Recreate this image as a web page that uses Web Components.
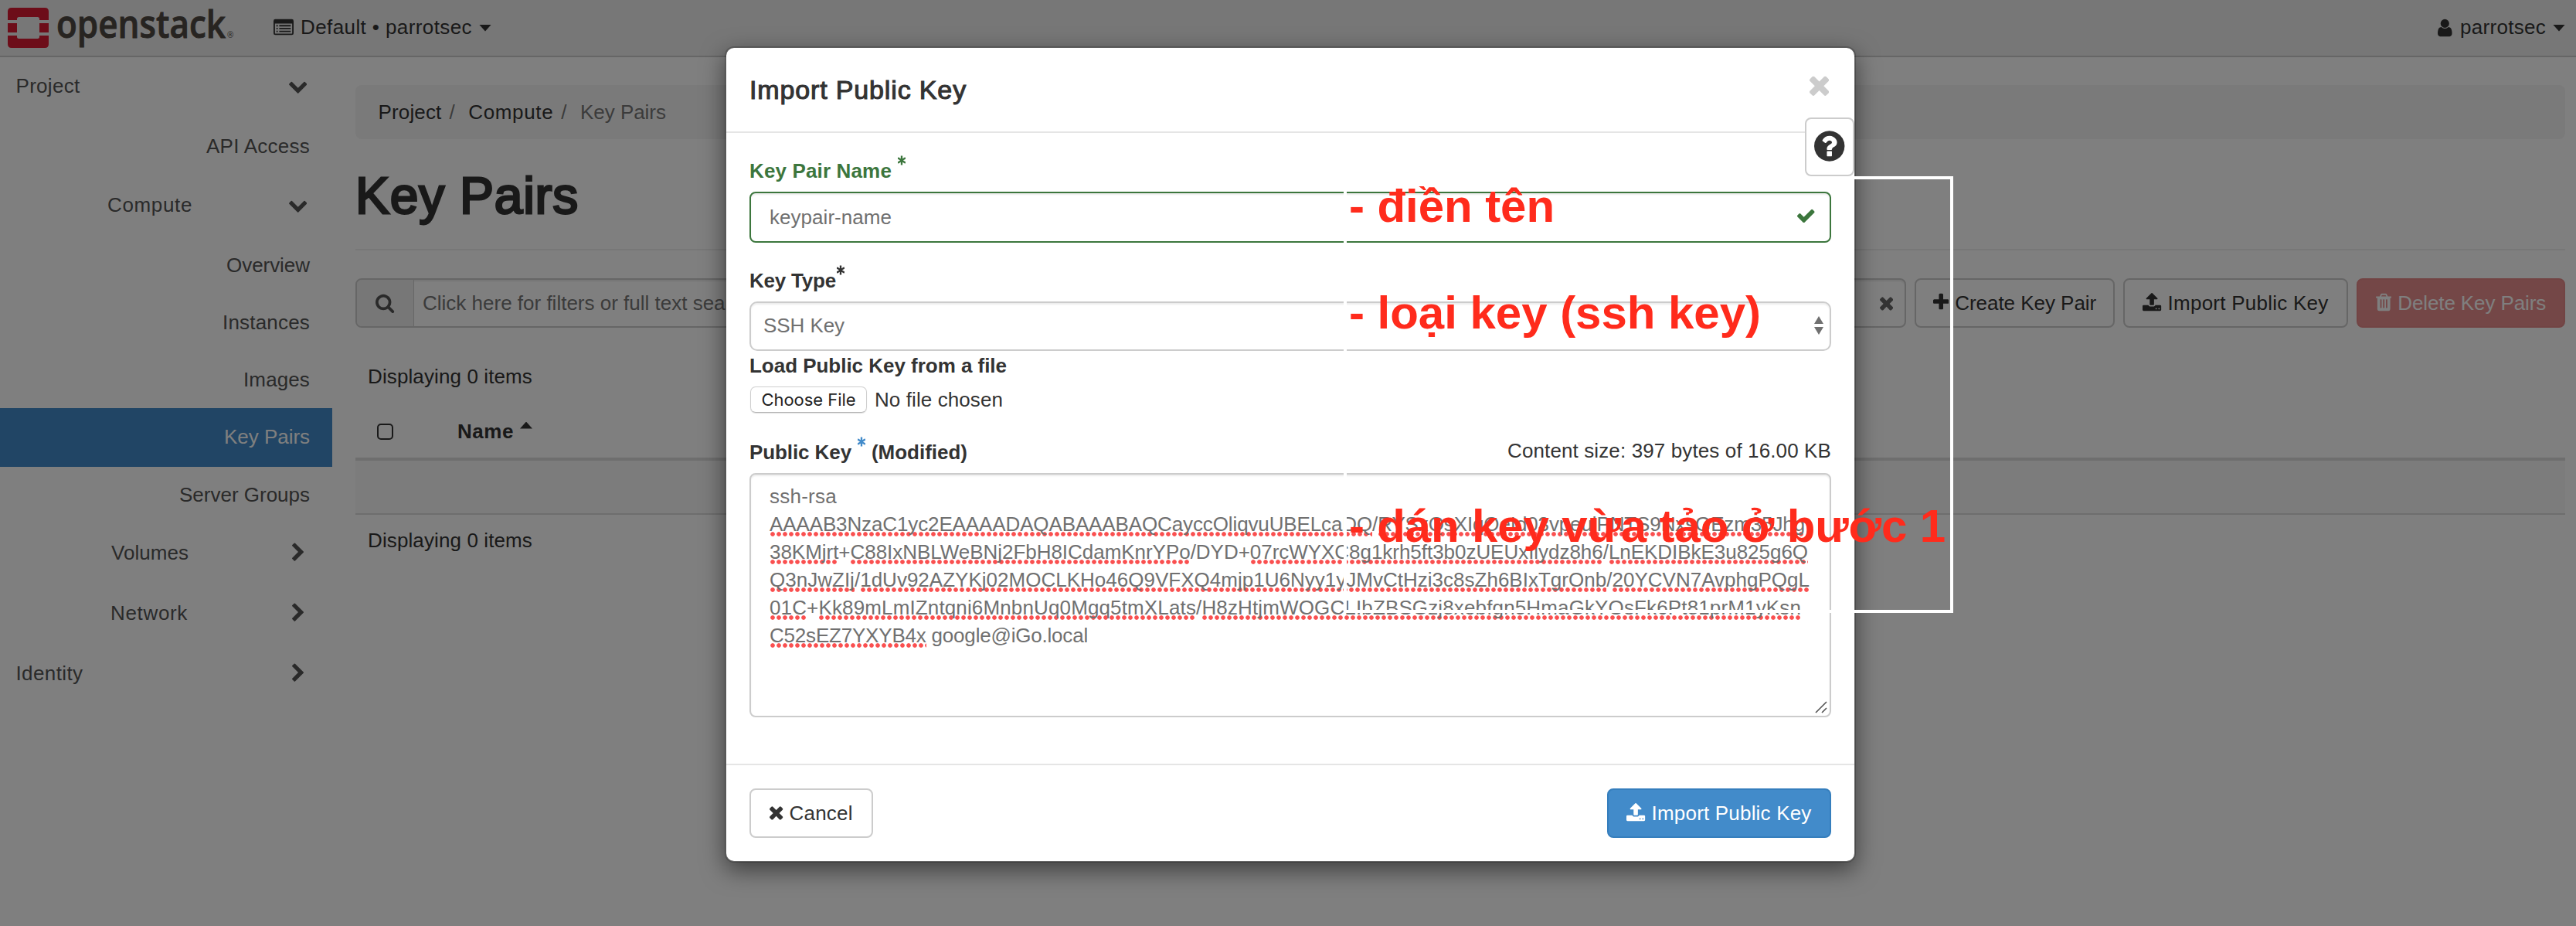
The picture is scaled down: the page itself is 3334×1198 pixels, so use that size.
<!DOCTYPE html>
<html lang="en">
<head>
<meta charset="utf-8">
<title>Key Pairs - OpenStack Dashboard</title>
<style>
  html, body { margin: 0; height: 100%; overflow: hidden; background: #fff; }
  body { font: 26px/36px "Liberation Sans", sans-serif; color: #333; }
</style>
</head>
<body>
<os-dashboard></os-dashboard>
<script>
const ICONS = {
  check: [120, 1552, 'M1671 566q0 40-28 68l-724 724-136 136q-28 28-68 28t-68-28l-136-136-362-362q-28-28-28-68t28-68l136-136q28-28 68-28t68 28l294 295 656-657q28-28 68-28t68 28l136 136q28 28 28 68z'],
  times: [302, 1188, 'M1490 1322q0 40-28 68l-136 136q-28 28-68 28t-68-28l-294-294-294 294q-28 28-68 28t-68-28l-136-136q-28-28-28-68t28-68l294-294-294-294q-28-28-28-68t28-68l136-136q28-28 68-28t68 28l294 294 294-294q28-28 68-28t68 28l136 136q28 28 28 68t-28 68l-294 294 294 294q28 28 28 68z'],
  plus: [192, 1408, 'M1600 736v192q0 40-28 68t-68 28h-416v416q0 40-28 68t-68 28h-192q-40 0-68-28t-28-68v-416h-416q-40 0-68-28t-28-68v-192q0-40 28-68t68-28h416v-416q0-40 28-68t68-28h192q40 0 68 28t28 68v416h416q40 0 68 28t28 68z'],
  upload: [64, 1664, 'M1344 1472q0-26-19-45t-45-19-45 19-19 45 19 45 45 19 45-19 19-45zm256 0q0-26-19-45t-45-19-45 19-19 45 19 45 45 19 45-19 19-45zm128-224v320q0 40-28 68t-68 28h-1472q-40 0-68-28t-28-68v-320q0-40 28-68t68-28h427q21 56 70.5 92t110.5 36h256q61 0 110.5-36t70.5-92h427q40 0 68 28t28 68zm-325-648q-17 40-59 40h-256v448q0 26-19 45t-45 19h-256q-26 0-45-19t-19-45v-448h-256q-42 0-59-40-17-39 14-69l448-448q18-19 45-19t45 19l448 448q31 30 14 69z'],
  down: [90, 1612, 'M1683 808l-742 741q-19 19-45 19t-45-19l-742-741q-19-19-19-45.5t19-45.5l166-165q19-19 45-19t45 19l531 531 531-531q19-19 45-19t45 19l166 165q19 19 19 45.5t-19 45.5z'],
  right: [346, 1036, 'M1363 877l-742 742q-19 19-45 19t-45-19l-166-166q-19-19-19-45t19-45l531-531-531-531q-19-19-19-45t19-45l166-166q19-19 45-19t45 19l742 742q19 19 19 45t-19 45z'],
  search: [64, 1664, 'M1216 832q0-185-131.5-316.5t-316.5-131.5-316.5 131.5-131.5 316.5 131.5 316.5 316.5 131.5 316.5-131.5 131.5-316.5zm512 832q0 52-38 90t-90 38q-54 0-90-38l-343-342q-179 124-399 124-143 0-273.5-55.5t-225-150-150-225-55.5-273.5 55.5-273.5 150-225 225-150 273.5-55.5 273.5 55.5 225 150 150 225 55.5 273.5q0 220-124 399l343 343q37 37 37 90z'],
  question: [128, 1536, 'M1024 1376v-192q0-14-9-23t-23-9h-192q-14 0-23 9t-9 23v192q0 14 9 23t23 9h192q14 0 23-9t9-23zm256-672q0-88-55.5-163t-138.5-116-170-41q-243 0-371 213-15 24 8 42l132 100q7 6 19 6 16 0 25-12 53-68 86-92 34-24 86-24 48 0 85.5 26t37.5 59q0 38-20 61t-68 45q-63 28-115.5 86.5t-52.5 125.5v36q0 14 9 23t23 9h192q14 0 23-9t9-23q0-19 21.5-49.5t54.5-49.5q32-18 49-28.5t46-35 44.5-48 28-60.5 12.5-81zm384 192q0 209-103 385.5t-279.5 279.5-385.5 103-385.5-103-279.5-279.5-103-385.5 103-385.5 279.5-279.5 385.5-103 385.5 103 279.5 279.5 103 385.5z'],
  user: [256, 1280, 'M1536 1399q0 109-62.5 187t-150.5 78h-854q-88 0-150.5-78t-62.5-187q0-85 8.5-160.5t31.5-152 58.5-131 94-89 134.5-34.5q131 128 313 128t313-128q76 0 134.5 34.5t94 89 58.5 131 31.5 152 8.5 160.5zm-256-887q0 159-112.5 271.5t-271.5 112.5-271.5-112.5-112.5-271.5 112.5-271.5 271.5-112.5 271.5 112.5 112.5 271.5z'],
  list: [0, 1792, 'M160 128H1632Q1792 128 1792 288V1376Q1792 1536 1632 1536H160Q0 1536 0 1376V288Q0 128 160 128ZM128 512V1376Q128 1408 160 1408H1632Q1664 1408 1664 1376V512ZM256 640H384V768H256ZM256 896H384V1024H256ZM256 1152H384V1280H256ZM512 640H1536V768H512ZM512 896H1536V1024H512ZM512 1152H1536V1280H512Z'],
  trash: [192, 1408, 'M704 1376V672q0-32-32-32h-64q-32 0-32 32v704q0 32 32 32h64q32 0 32-32ZM960 1376V672q0-32-32-32h-64q-32 0-32 32v704q0 32 32 32h64q32 0 32-32ZM1216 1376V672q0-32-32-32h-64q-32 0-32 32v704q0 32 32 32h64q32 0 32-32ZM672 384H1120L1072 267Q1065 258 1055 256H738Q728 258 721 267ZM1600 416V480Q1600 512 1568 512H1472V1460Q1472 1664 1312 1664H480Q320 1664 320 1464V512H224Q192 512 192 480V416Q192 384 224 384H533L603 217Q640 128 736 128H1056Q1152 128 1189 217L1259 384H1568Q1600 384 1600 416Z'],
  star: [300, 1192, 'M756 180h280v450l380-230 140 240-390 220v72l390 220-140 240-380-230v450h-280v-450l-380 230-140-240 390-220v-72L236 640l140-240 380 230z']
};

/* Base class: opens a shadow root holding the element's own styles and markup. */
class View extends HTMLElement {
  connectedCallback() {
    if (this.shadowRoot) return;
    this.attachShadow({ mode: 'open' }).innerHTML =
      `<style>*{box-sizing:border-box}${this.css()}</style>${this.html()}`;
    this.ready();
  }
  css() { return ''; }
  html() { return '<slot></slot>'; }
  ready() {}
}

customElements.define('os-icon', class extends View {
  css() { return ':host{display:block;flex:none;line-height:0}svg{display:block}'; }
  html() {
    const [x, w, d] = ICONS[this.getAttribute('name')];
    const s = +(this.getAttribute('size') || 26);
    return `<svg width="${w * s / 1792}" height="${s}" viewBox="${x} 0 ${w} 1792"><path fill="currentColor" fill-rule="evenodd" d="${d}"/></svg>`;
  }
});

/* A run of text tracked to the width given in "w". */
customElements.define('os-text', class extends View {
  css() { return ':host{display:inline-block;flex:none;white-space:nowrap}'; }
  ready() {
    const w = +this.getAttribute('w');
    if (!w) return;
    const n = this.textContent.length;
    this.style.letterSpacing = (w - this.getBoundingClientRect().width) / n + 'px';
  }
});

customElements.define('os-caret', class extends View {
  css() { return ':host{display:block;flex:none;width:16px;height:9px;background:currentColor;clip-path:polygon(0 0,100% 0,50% 100%)}:host([up]){clip-path:polygon(50% 0,100% 100%,0 100%)}'; }
  html() { return ''; }
});

customElements.define('os-logo', class extends View {
  css() { return ':host{display:block;width:310px;height:72px;flex:none}svg{display:block}'; }
  html() {
    return `<svg width="310" height="72">
      <g fill="#da1a32">
        <path d="M15 10H58Q63 10 63 15V26H51V24.500Q51 22 48.500 22H24.500Q22 22 22 24.500V26H10V15Q10 10 15 10Z"/>
        <path d="M10 30H22V42H10ZM51 30H63V42H51Z"/>
        <path d="M10 46H22V47.500Q22 50 24.500 50H48.500Q51 50 51 47.500V46H63V57Q63 62 58 62H15Q10 62 10 57Z"/>
      </g>
      <text x="73" y="49" textLength="219" lengthAdjust="spacingAndGlyphs" font-family="Open Sans" font-weight="600" font-size="49.500" fill="#4f4843" stroke="#4f4843" stroke-width=".9">openstack</text>
      <text x="294" y="49" font-family="Open Sans" font-size="10" fill="#4f4843">®</text>
    </svg>`;
  }
});

customElements.define('os-topbar', class extends View {
  css() { return `:host{display:flex;align-items:center;height:74px;flex:none;background:#eee;border-bottom:2px solid #ccc;box-sizing:border-box;padding-right:14px}
    .ctx,.user{display:flex;align-items:center}.ctx{margin-left:44px}.user{margin-left:auto}
    os-text{position:relative;top:-1px}
    os-caret{margin-left:9px}.ctx os-text{margin-left:9px}.user os-text{margin-left:10px}`; }
  html() {
    return `<os-logo></os-logo>
    <div class="ctx"><os-icon name="list"></os-icon><os-text w="222">Default • parrotsec</os-text><os-caret></os-caret></div>
    <div class="user"><os-icon name="user"></os-icon><os-text w="111">parrotsec</os-text><os-caret></os-caret></div>`;
  }
});

customElements.define('os-nav-item', class extends View {
  css() { return `:host{display:flex;align-items:center;box-sizing:border-box;flex:none;height:74px;padding:0 31px 0 20.5px;color:#555;justify-content:space-between}
    :host([leaf]){justify-content:flex-end;padding-right:29px}
    :host([active]){background:#428bca;color:#fff}
    :host([group]){padding-left:139px}
    span{display:flex;justify-content:center;width:25px;margin-right:1px}`; }
  html() {
    const i = this.getAttribute('icon');
    return `<slot></slot>${i ? `<span><os-icon name="${i}"></os-icon></span>` : ''}`;
  }
});

customElements.define('os-sidebar', class extends View {
  css() { return ':host{display:flex;flex-direction:column;width:430px;flex:none}'; }
  html() {
    return `
    <os-nav-item icon="down"><os-text w="83">Project</os-text></os-nav-item>
    <os-nav-item leaf style="height:82px"><os-text w="134">API Access</os-text></os-nav-item>
    <os-nav-item group icon="down" style="height:70px;margin-bottom:6px"><os-text w="110">Compute</os-text></os-nav-item>
    <os-nav-item leaf><os-text w="108">Overview</os-text></os-nav-item>
    <os-nav-item leaf><os-text w="113">Instances</os-text></os-nav-item>
    <os-nav-item leaf><os-text w="86">Images</os-text></os-nav-item>
    <os-nav-item leaf active style="height:76px;padding-bottom:2px"><os-text w="111">Key Pairs</os-text></os-nav-item>
    <os-nav-item leaf style="height:72px"><os-text w="169">Server Groups</os-text></os-nav-item>
    <os-nav-item group icon="right" style="height:78px;padding-left:144px"><os-text w="100">Volumes</os-text></os-nav-item>
    <os-nav-item group icon="right" style="height:78px;padding-left:143px"><os-text w="100">Network</os-text></os-nav-item>
    <os-nav-item icon="right" style="height:77px"><os-text w="87">Identity</os-text></os-nav-item>`;
  }
});

customElements.define('os-button', class extends View {
  css() { return `:host{display:flex;align-items:center;justify-content:center;gap:8px;height:64px;flex:none;box-sizing:border-box;border:2px solid #ccc;border-radius:8px;background:#fff;color:#333}
    :host([primary]){background:#428bca;border-color:#357ebd;color:#fff}
    :host([danger]){background:#e88f8f;border-color:#e48888;color:#fff}
    os-icon{position:relative;top:-1px}`; }
  html() { return `<os-icon name="${this.getAttribute('icon')}"></os-icon><slot></slot>`; }
});

customElements.define('os-content', class extends View {
  css() { return `:host{display:flex;flex-direction:column;flex:1;padding:36px 14px 0 30px}
    .crumbs{display:flex;align-items:center;height:70px;background:#f5f5f5;border-radius:8px;padding-left:29.5px}
    .crumbs i{font-style:normal;color:#777;margin:0 17.5px 0 10px}
    .crumbs .cur{color:#777}
    h1{margin:36px 0 0;height:74px;line-height:74px;font-size:66px;font-weight:400;-webkit-text-stroke:2.8px #333}
    hr{border:0;height:2px;width:100%;background:#eee;margin:32px 0 36px}
    .tools{display:flex;gap:11px}
    .filter{flex:1;display:flex;align-items:center;height:64px;border:2px solid #ccc;border-radius:8px;box-shadow:inset 0 2px 2px rgba(0,0,0,.075);color:#777;padding-right:15px}
    .addon{display:flex;align-items:center;justify-content:center;width:74px;height:60px;background:#eee;border-right:1px solid #ccc;color:#555;margin-right:11px;border-radius:6px 0 0 6px}
    .filter .x{margin-left:auto;color:#666}
    .count{padding-left:16px;height:36px}
    .head{display:flex;align-items:center;height:72px;border-bottom:4px solid #ddd;padding:0 0 0 28px}
    .box{width:21px;height:21px;border:2px solid #333;border-radius:5px;margin-right:83px}
    .head os-caret{margin:-16px 0 0 8px}
    .row{height:70px;background:#f9f9f9;border-bottom:2px solid #ddd}`; }
  html() {
    return `
    <div class="crumbs"><os-text w="82">Project</os-text><i>/</i><os-text w="110">Compute</os-text><i>/</i><os-text class="cur" w="111">Key Pairs</os-text></div>
    <h1><os-text w="289">Key Pairs</os-text></h1>
    <hr>
    <div class="tools">
      <div class="filter"><span class="addon"><os-icon name="search"></os-icon></span><os-text>Click here for filters or full text search.</os-text><os-icon class="x" name="times"></os-icon></div>
      <os-button icon="plus" style="width:259px"><os-text w="183">Create Key Pair</os-text></os-button>
      <os-button icon="upload" style="width:291px"><os-text w="208">Import Public Key</os-text></os-button>
      <os-button icon="trash" danger style="width:270px"><os-text w="192">Delete Key Pairs</os-text></os-button>
    </div>
    <div class="count" style="margin:45px 0 19px"><os-text w="213">Displaying 0 items</os-text></div>
    <div class="head"><span class="box"></span><b><os-text w="73">Name</os-text></b><os-caret up></os-caret></div>
    <div class="row"></div>
    <div class="count" style="margin-top:15px"><os-text w="213">Displaying 0 items</os-text></div>`;
  }
});

customElements.define('os-label', class extends View {
  css() { return `:host{display:flex;align-items:center;height:36px;margin-bottom:9px;font-weight:700}
    os-icon{margin-top:-28px}`; }
  html() { return `<slot></slot><slot name="mark"></slot>`; }
});

/* Text of one textarea line; parts marked in <u> carry the spelling underline. */
customElements.define('key-line', class extends View {
  css() { return `:host{display:block;height:36px;white-space:pre}
    os-text{white-space:pre}
    u{text-decoration:none;background:radial-gradient(circle at 50% 50%,#fa5050 0 2.400px,rgba(250,80,80,0) 3.200px) 0 100%/8px 6px repeat-x;padding-bottom:1px}`; }
  html() {
    const parts = this.textContent.split(/([+/ ])/).map(p => p.length > 3 || p === '01C' ? (this.hasAttribute('plain') || p.includes('@') ? p : `<u>${p}</u>`) : p).join('');
    return `<os-text w="${this.getAttribute('w')}">${parts}</os-text>`;
  }
});

customElements.define('import-dialog', class extends View {
  css() { return `:host{display:flex;flex-direction:column;width:1464px;height:1056px;box-sizing:border-box;border:2px solid rgba(0,0,0,.2);border-radius:12px;background:#fff;background-clip:padding-box;box-shadow:0 10px 30px rgba(0,0,0,.5)}
    header{display:flex;align-items:center;justify-content:space-between;height:110px;flex:none;border-bottom:2px solid #e5e5e5;padding:0 33px 0 30px}
    h4{margin:0;font-size:34px;font-weight:400;-webkit-text-stroke:1.1px #333}
    header os-icon{color:#ccc;margin-top:-13px}
    main{display:flex;flex-direction:column;padding:31px 30px 60px;position:relative}
    .help{position:absolute;right:0;top:-20px;width:64px;height:76px;border:2px solid #ccc;border-radius:8px;background:#fff;display:flex;align-items:center;justify-content:center;padding-bottom:2px}
    .field{display:flex;align-items:center;justify-content:space-between;border:2px solid #ccc;border-radius:8px;box-shadow:inset 0 2px 2px rgba(0,0,0,.075);color:#707070}
    .name{height:66px;border-color:#3c763d;padding:0 19px 0 24px;margin-bottom:31px}
    .name os-icon{color:#3c763d;margin-top:-4px}
    .type{height:64px;padding:0 8px 2px 16px;margin-bottom:1px;border-radius:10px}
    .arrows{display:flex;flex-direction:column;gap:4px}
    .arrows os-caret{width:12px;height:10px}
    .file{display:flex;align-items:center;height:34px;margin-bottom:33px;gap:10px}
    .choose{display:flex;align-items:center;justify-content:center;width:151px;height:34px;border:1px solid #cfcfcf;border-bottom-color:#b5b5b5;border-radius:7px;font:22px/30px Inter,sans-serif;color:#222;margin-left:1px;box-shadow:0 1px 1px rgba(0,0,0,.12)}
    .pk{display:flex;justify-content:space-between}
    .pk>os-text{margin-top:-2px}
    .area{position:relative;display:block;height:316px;padding:10px 24px}
    .grip{position:absolute;right:3px;bottom:3px}
    footer{display:flex;align-items:center;justify-content:space-between;flex:1;border-top:2px solid #e5e5e5;padding:0 30px}`; }
  html() {
    return `
    <header><h4><os-text w="281">Import Public Key</os-text></h4><os-icon name="times" size="38"></os-icon></header>
    <main>
      <os-label style="color:#3c763d"><os-text w="184">Key Pair Name</os-text><os-icon name="star" size="15" style="margin:-28px 0 0 8px"></os-icon></os-label>
      <div class="field name"><os-text w="158">keypair-name</os-text><os-icon name="check"></os-icon></div>
      <os-label><os-text w="112">Key Type</os-text><os-icon name="star" size="15" style="margin:-28px 0 0 1px"></os-icon></os-label>
      <div class="field type"><os-text w="105">SSH Key</os-text><span class="arrows"><os-caret up></os-caret><os-caret></os-caret></span></div>
      <os-label><os-text w="333">Load Public Key from a file</os-text></os-label>
      <div class="file"><span class="choose"><os-text w="122">Choose File</os-text></span><os-text w="166">No file chosen</os-text></div>
      <div class="pk">
        <os-label><os-text w="132">Public Key</os-text><os-icon name="star" size="15" style="color:#428bca;margin:-28px 8px 0"></os-icon><os-text w="124">(Modified)</os-text></os-label>
        <os-text w="419">Content size: 397 bytes of 16.00 KB</os-text>
      </div>
      <div class="field area">
        <key-line plain w="87">ssh-rsa</key-line>
        <key-line w="1340">AAAAB3NzaC1yc2EAAAADAQABAAABAQCayccOliqvuUBELcaDQ/RYSxQsXIqOeId03vpeuiPNTS9NxsGEzm35Jhg</key-line>
        <key-line w="1344">38KMjrt+C88IxNBLWeBNj2FbH8ICdamKnrYPo/DYD+07rcWYXC8g1krh5ft3b0zUEUxIlydz8h6/LnEKDIBkE3u825g6Q</key-line>
        <key-line w="1346">Q3nJwZIj/1dUv92AZYKj02MOCLKHo46Q9VFXQ4mjp1U6Nyy1yJMvCtHzi3c8sZh6BIxTgrOnb/20YCVN7AvphgPQgL</key-line>
        <key-line w="1335">01C+Kk89mLmIZntqni6MnbnUq0Mgq5tmXLats/H8zHtjmWOGCLIbZBSGzj8xebfgn5HmaGkYOsFk6Pt81prM1yKsn</key-line>
        <key-line w="412">C52sEZ7YXYB4x google@iGo.local</key-line>
        <svg class="grip" width="16" height="16"><path d="M1 15L15 1M9 15L15 9" stroke="#555" stroke-width="1.600"/></svg>
      </div>
      <span class="help"><os-icon name="question" size="46"></os-icon></span>
    </main>
    <footer>
      <os-button icon="times" style="width:160px"><os-text w="82">Cancel</os-text></os-button>
      <os-button icon="upload" primary style="width:290px"><os-text w="207">Import Public Key</os-text></os-button>
    </footer>`;
  }
});

customElements.define('os-note', class extends View {
  css() { return ':host{position:absolute;left:1746px;font:700 60px/68px "Liberation Sans",sans-serif;color:#ff2b1c;white-space:nowrap}'; }
});

customElements.define('os-dashboard', class extends View {
  css() { return `:host{display:flex;flex-direction:column;position:relative;width:3334px;height:1198px;overflow:hidden}
    .page{display:flex;flex:1}
    .backdrop{position:absolute;inset:0;background:rgba(0,0,0,.5);display:flex;align-items:flex-start;justify-content:center;padding:60px 0 0 6px}
    .frame{position:absolute;left:1739px;top:228px;width:789px;height:565px;border:4px solid #fff}`; }
  html() {
    return `<os-topbar></os-topbar>
    <div class="page"><os-sidebar></os-sidebar><os-content></os-content></div>
    <div class="backdrop"><import-dialog></import-dialog></div>
    <div class="frame"></div>
    <os-note style="top:233px"><os-text w="266">- điền tên</os-text></os-note>
    <os-note style="top:371px"><os-text w="533">- loại key (ssh key)</os-text></os-note>
    <os-note style="top:647px"><os-text w="772">- dán key vừa tảo ở bước 1</os-text></os-note>`;
  }
});
</script>
</body>
</html>
